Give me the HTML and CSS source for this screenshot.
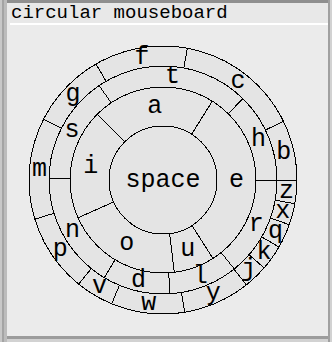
FILE: index.html
```html
<!DOCTYPE html>
<html>
<head>
<meta charset="utf-8">
<link rel="stylesheet" href="styles.css">
</head>
<body>
<div class="window">
  <div class="title">circular mouseboard</div>
  <div class="panel">
    <svg class="board" width="320" height="310" viewBox="0 0 320 310">
      <g transform="translate(155 155)" class="rings">
        <circle r="134" class="ring"/>
        <circle r="114" class="ring"/>
        <circle r="93" class="ring"/>
        <circle r="54" class="ring"/>
        <g class="divs">
          <line x1="54" x2="93" transform="rotate(-135)"/>
          <line x1="54" x2="93" transform="rotate(-58)"/>
          <line x1="54" x2="93" transform="rotate(57.5)"/>
          <line x1="54" x2="93" transform="rotate(83)"/>
          <line x1="54" x2="93" transform="rotate(156)"/>

          <line x1="93" x2="114" transform="rotate(-124)"/>
          <line x1="93" x2="114" transform="rotate(-45.5)"/>
          <line x1="93" x2="114" transform="rotate(0)"/>
          <line x1="93" x2="114" transform="rotate(51.3)"/>
          <line x1="93" x2="114" transform="rotate(86.5)"/>
          <line x1="93" x2="114" transform="rotate(121)"/>
          <line x1="93" x2="114" transform="rotate(181)"/>

          <line x1="114" x2="134" transform="rotate(-120)"/>
          <line x1="114" x2="134" transform="rotate(-79.5)"/>
          <line x1="114" x2="134" transform="rotate(-26)"/>
          <line x1="114" x2="134" transform="rotate(0)"/>
          <line x1="114" x2="134" transform="rotate(10.2)"/>
          <line x1="114" x2="134" transform="rotate(19.5)"/>
          <line x1="114" x2="134" transform="rotate(30)"/>
          <line x1="114" x2="134" transform="rotate(41)"/>
          <line x1="114" x2="134" transform="rotate(51.5)"/>
          <line x1="114" x2="134" transform="rotate(80.7)"/>
          <line x1="114" x2="134" transform="rotate(112.5)"/>
          <line x1="114" x2="134" transform="rotate(129)"/>
          <line x1="114" x2="134" transform="rotate(163)"/>
          <line x1="114" x2="134" transform="rotate(207)"/>
        </g>
        <g class="keys">
          <text x="0" y="0">space</text>

          <text transform="rotate(-96.5) translate(73.5) rotate(96.5)">a</text>
          <text transform="rotate(0) translate(73.5) rotate(0)">e</text>
          <text transform="rotate(70.25) translate(73.5) rotate(-70.25)">u</text>
          <text transform="rotate(119.5) translate(73.5) rotate(-119.5)">o</text>
          <text transform="rotate(190.5) translate(73.5) rotate(-190.5)">i</text>

          <text transform="rotate(-84.75) translate(103.5) rotate(84.75)">t</text>
          <text transform="rotate(-22.75) translate(103.5) rotate(22.75)">h</text>
          <text transform="rotate(25.65) translate(103.5) rotate(-25.65)">r</text>
          <text transform="rotate(68.9) translate(103.5) rotate(-68.9)">l</text>
          <text transform="rotate(103.75) translate(103.5) rotate(-103.75)">d</text>
          <text transform="rotate(151) translate(103.5) rotate(-151)">n</text>
          <text transform="rotate(208.5) translate(103.5) rotate(-208.5)">s</text>

          <text transform="rotate(-99.75) translate(124) rotate(99.75)">f</text>
          <text transform="rotate(-52.75) translate(124) rotate(52.75)">c</text>
          <text transform="rotate(-13) translate(124) rotate(13)">b</text>
          <text transform="rotate(5.1) translate(124) rotate(-5.1)">z</text>
          <text transform="rotate(14.85) translate(124) rotate(-14.85)">x</text>
          <text transform="rotate(24.75) translate(124) rotate(-24.75)">q</text>
          <text transform="rotate(35.5) translate(124) rotate(-35.5)">k</text>
          <text transform="rotate(46.25) translate(124) rotate(-46.25)">j</text>
          <text transform="rotate(66.1) translate(124) rotate(-66.1)">y</text>
          <text transform="rotate(96.6) translate(124) rotate(-96.6)">w</text>
          <text transform="rotate(120.75) translate(124) rotate(-120.75)">v</text>
          <text transform="rotate(146) translate(124) rotate(-146)">p</text>
          <text transform="rotate(185) translate(124) rotate(-185)">m</text>
          <text transform="rotate(-136.5) translate(124) rotate(136.5)">g</text>
        </g>
      </g>
    </svg>
  </div>
</div>
</body>
</html>
```
FILE: styles.css
```css
html, body {
  margin: 0;
  padding: 0;
  background: #e9e9e9;
}

.window {
  box-sizing: border-box;
  width: 332px;
  height: 342px;
  display: flex;
  flex-direction: column;
  padding: 3px 4px 6px 8px;
  background: #ebebeb;
  box-shadow:
    inset 2px 0 0 #c8c8c8,
    inset 4px 0 0 #a4a4a4,
    inset 7px 0 0 #bcbcbc,
    inset -2px 0 0 #d2d2d2,
    inset -4px 0 0 #a0a0a0,
    inset 0 -3px 0 #d2d2d2,
    inset 0 -6px 0 #9c9c9c,
    inset 0 3px 0 #8f8f8f;
}

.title {
  height: 20px;
  margin-left: 2px;
  padding-left: 1px;
  background: #e8e8e8;
  border-bottom: 2px solid #ffffff;
  font-family: "Liberation Mono", monospace;
  font-size: 19px;
  line-height: 20px;
  color: #000;
  white-space: nowrap;
  overflow: hidden;
}

.panel {
  flex: 1;
  background: #ebebeb;
}

.board {
  display: block;
}

.ring {
  fill: #e4e4e4;
  stroke: #000;
  stroke-width: 1;
  shape-rendering: crispEdges;
}

.divs line {
  stroke: #000;
  stroke-width: 1;
  shape-rendering: crispEdges;
}

.keys text {
  font-family: "Liberation Mono", monospace;
  font-size: 25px;
  fill: #000;
  text-anchor: middle;
  dominant-baseline: central;
}
```
